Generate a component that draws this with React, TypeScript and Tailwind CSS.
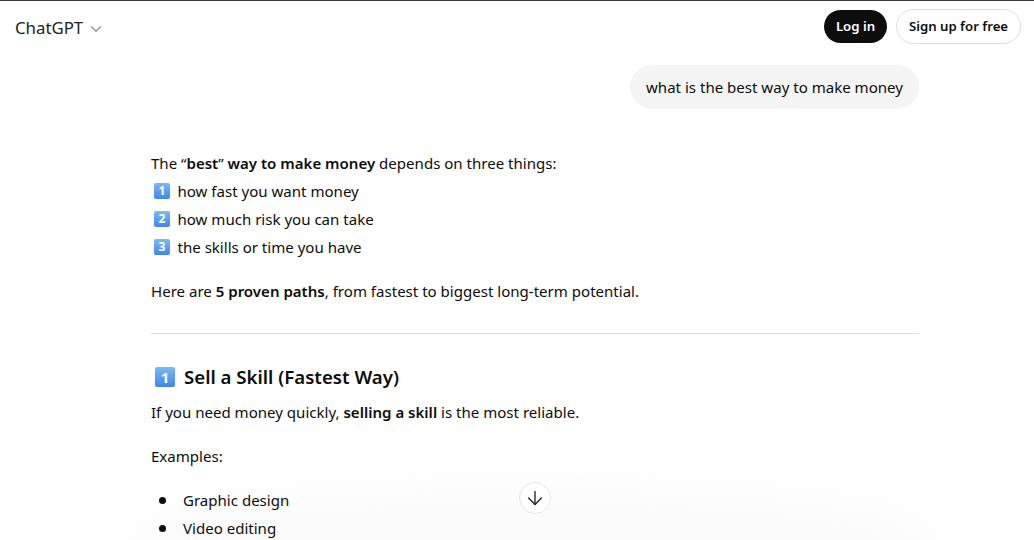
import { FC } from "react";
import { ArrowDown, ChevronDown } from "lucide-react";

const Keycap: FC<{ n: number; big?: boolean }> = ({ n, big }) => (
  <span
    className={`inline-flex items-center justify-center rounded-[2px] bg-gradient-to-b from-[#7db8f5] to-[#3f86e8] font-bold leading-none text-white ${
      big ? "h-[20px] w-[20px] text-[15px]" : "h-[16px] w-[16px] text-[12px]"
    }`}
  >
    {n}
  </span>
);

const ListLine: FC<{ n: number; text: string }> = ({ n, text }) => (
  <div className="flex h-7 items-center pl-[3px]">
    <Keycap n={n} />
    <span className="ml-[7.5px]">{text}</span>
  </div>
);

const Bullet: FC<{ text: string }> = ({ text }) => (
  <li className="flex h-7 items-center">
    <span className="ml-[8px] mr-[17px] h-[7px] w-[7px] rounded-full bg-[#0d0d0d]" />
    {text}
  </li>
);

const App: FC = () => {
  return (
    <div
      className="relative h-[540px] w-[1034px] overflow-hidden border-t border-[#3c3c3c] bg-white text-[15.05px] leading-7 text-[#0d0d0d]"
      style={{ fontFamily: '"Noto Sans", sans-serif' }}
    >
      <header className="flex h-[51px] items-center justify-between pl-[15px] pr-[13px]">
        <div className="mt-[2px] flex items-center gap-[3.5px] text-[16.8px] text-[#222]">
          ChatGPT
          <ChevronDown size={18} strokeWidth={1.5} className="mt-[2px] text-[#8e8e8e]" />
        </div>
        <div className="flex items-center gap-[9px] text-[13.2px] font-semibold leading-none">
          <button className="h-[33px] w-[63px] rounded-full bg-[#0d0d0d] pt-[1px] text-white">Log in</button>
          <button className="h-[35px] w-[125px] rounded-full border border-[#dcdcdc] pt-[1px]">Sign up for free</button>
        </div>
      </header>

      {/* soft haze behind the composer */}
      <div className="pointer-events-none absolute bottom-[-60px] left-[120px] h-[110px] w-[830px] rounded-[50%] bg-[#f5f5f5] opacity-50 blur-[30px]" />

      <main className="relative ml-[151px] w-[768px]">
        <div className="mt-[13px] flex justify-end">
          <div className="flex h-[44px] w-[289px] items-center justify-center rounded-[22px] bg-[#f4f4f4] pb-[1px]">
            what is the best way to make money
          </div>
        </div>

        <div className="mt-[40px]">
          <p>
            The “<b className="font-semibold">best</b>” <b className="font-semibold">way to make money</b> depends on three things:
          </p>
          <ListLine n={1} text="how fast you want money" />
          <ListLine n={2} text="how much risk you can take" />
          <ListLine n={3} text="the skills or time you have" />
        </div>

        <p className="mt-4">
          Here are <b className="font-semibold">5 proven paths</b>, from fastest to biggest long-term potential.
        </p>

        <hr className="mt-[28px] border-[#dedede]" />

        <h3 className="mt-7 flex h-[30px] items-center text-[18.65px] font-semibold">
          <span className="ml-[4px] mr-[9px] flex">
            <Keycap n={1} big />
          </span>
          Sell a Skill (Fastest Way)
        </h3>

        <p className="mt-[6px]">
          If you need money quickly, <b className="font-semibold">selling a skill</b> is the most reliable.
        </p>
        <p className="mt-4">Examples:</p>

        <ul className="mt-4">
          <Bullet text="Graphic design" />
          <Bullet text="Video editing" />
        </ul>
      </main>

      <button className="absolute left-[519px] top-[481px] flex h-8 w-8 items-center justify-center rounded-full border border-[#e5e5e5] bg-white">
        <ArrowDown size={22} strokeWidth={1.5} className="text-[#222]" />
      </button>
    </div>
  );
};

export default App;
